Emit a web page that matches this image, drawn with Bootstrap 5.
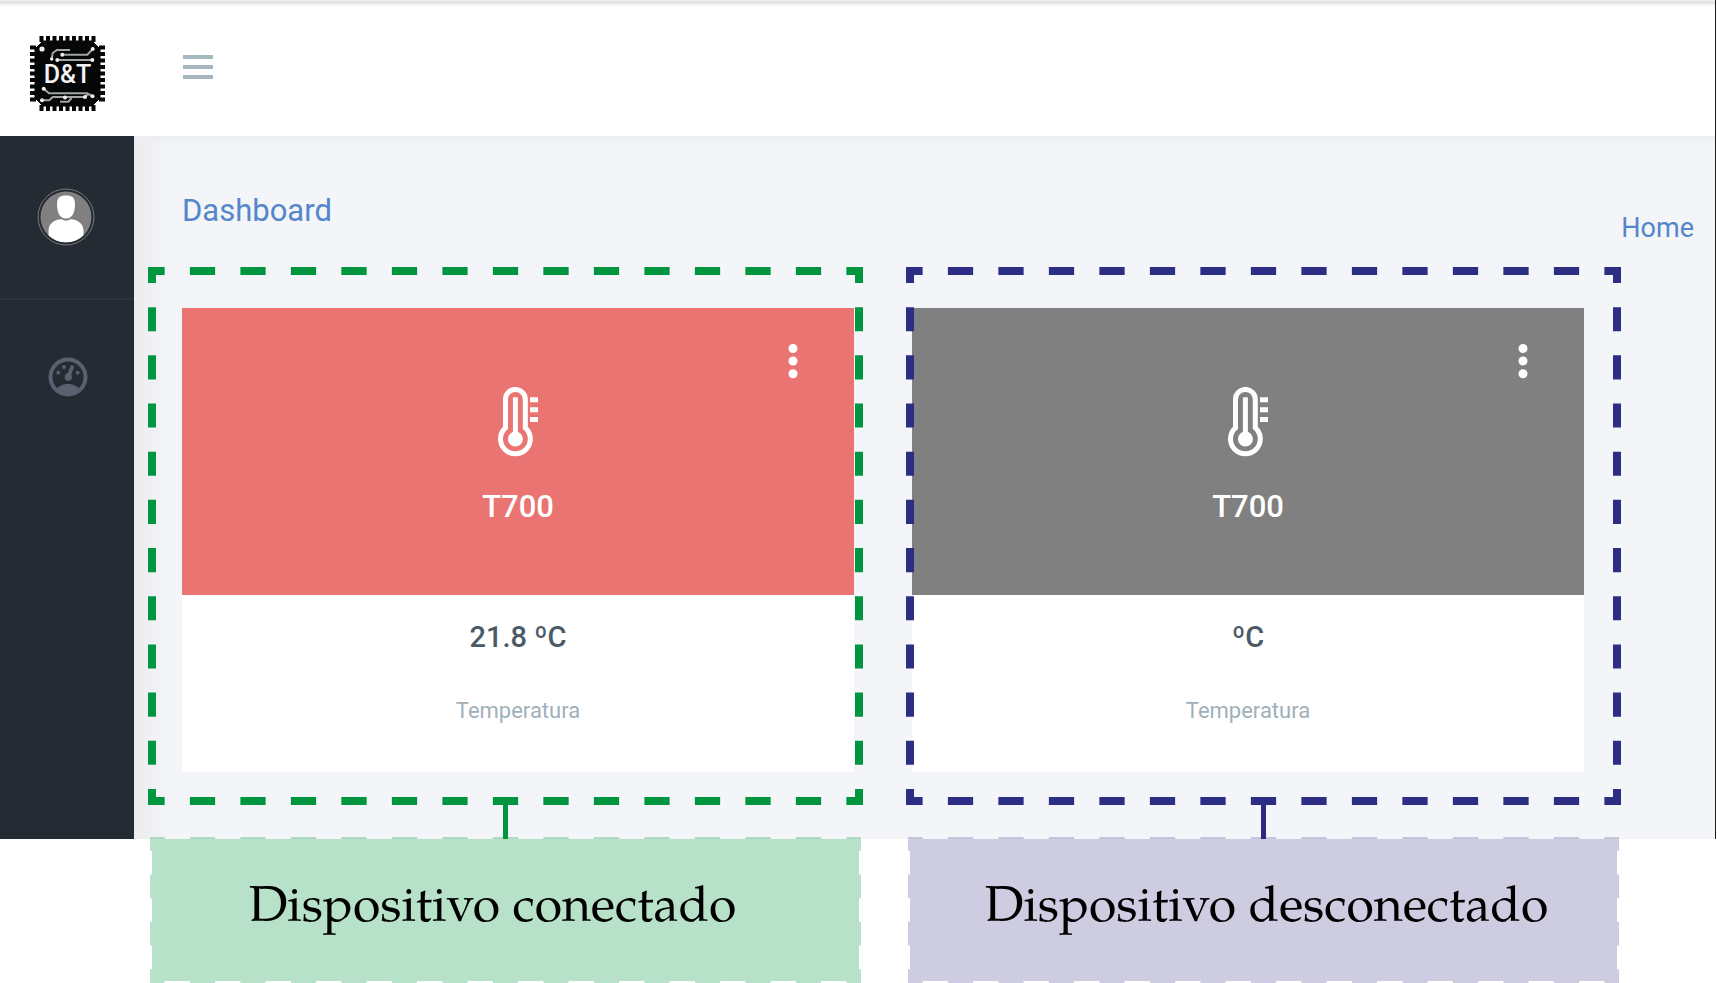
<!DOCTYPE html>
<html lang="es">
<head>
<meta charset="utf-8">
<meta name="viewport" content="width=device-width, initial-scale=1">
<title>Dashboard</title>
<link href="https://cdn.jsdelivr.net/npm/bootstrap@5.3.0/dist/css/bootstrap.min.css" rel="stylesheet">
<style>
  body { font-family: Roboto, "Liberation Sans", sans-serif; background: #fff; }
  svg { display: block; }

  /* Application shell */
  .app { background: #f3f5f9; border-right: 1px solid #1c1c1c; margin-right: 1px; }
  .topbar { height: 136px; background: linear-gradient(#f4f5f4, #dcdedd 2px, #f8f8f8 5px, #fff 8px); }
  .brand-box { width: 134px; padding: 11px 0 0 30px; }
  .menu-btn { margin: 0 0 2px 49px; }
  .side { width: 134px; background: #252b33; color: #5a6070; }
  .user-box { height: 164px; padding: 52px 0 0 37px; border-bottom: 2px solid #2d333c; }
  .gauge-link { color: inherit; padding: 57px 0 0 48px; }
  .content { background: linear-gradient(#eceef1, rgba(243, 245, 249, 0) 9px), linear-gradient(90deg, #ececef, #f3f5f9 36px); padding: 57px 94px 0 14px; }
  .heading { height: 73px; }
  .page-title { font-size: 31px; line-height: 36px; color: #5585ca; margin: 0 0 0 34px; }
  .home-link { font-size: 27px; line-height: 36px; color: #5585ca; margin: 17px -73px 0 0; }
  .pair { display: grid; grid-template-columns: 1fr 1fr; gap: 43px; }

  /* Device cards */
  .zone { position: relative; padding: 42px 9px 33px 34px; }
  .zone-off { padding: 42px 37px 33px 6px; }
  .device-head { position: relative; height: 287px; padding-top: 79px; color: #fff; }
  .on { background: #ea7471; }
  .off { background: #808080; }
  .device-name { font-size: 31px; line-height: 40px; font-weight: 500; margin: 30px 0 0; }
  .dots-btn { position: absolute; right: 56px; top: 35px; }
  .device-data { height: 177px; background: #fff; padding-top: 24px; }
  .reading { font-size: 29px; line-height: 36px; font-weight: 500; color: #4a5a66; margin: 0; }
  .kind { font-size: 22px; line-height: 30px; color: #9fb0ba; margin: 41px 0 0; }

  /* Dashed outlines: each side holds a whole number of periods */
  .dashes { position: absolute; left: 4px; top: 5px; width: calc(100% - 8px); height: calc(100% - 9px); overflow: visible; stroke-width: 8px; pointer-events: none; }
  .dashes .run { stroke-dasharray: 1 1; stroke-dashoffset: .5; }
  .dashes .knot { width: 8px; height: 8px; stroke: none; transform-box: fill-box; transform: translate(-50%, -50%); }
  .dashes .fill { stroke: none; }
  .green { stroke: #00963f; fill: #00963f; }
  .blue { stroke: #2c2e83; fill: #2c2e83; }
  .stem { position: relative; z-index: 2; width: 5px; height: 34px; margin: 0 auto; }
  .stem-green { background: #00963f; }
  .stem-blue { background: #312783; }

  /* Captions */
  .captions { margin: -2px 0 0 134px; padding: 0 96px 0 14px; }
  .caption-box { position: relative; height: 146px; margin: 0 2px; }
  .caption-box .dashes { left: 2px; top: 2px; width: calc(100% - 4px); height: calc(100% - 4px); stroke-width: 4px; opacity: .28; }
  .caption-box .knot { width: 4px; height: 4px; }
  .caption-box .blue { opacity: .23; stroke: #312783; fill: #312783; }
  .caption-text { position: relative; font-family: "TeX Gyre Pagella", "Palatino Linotype", Palatino, "Liberation Serif", serif; font-size: 50px; line-height: 64px; color: #000; margin: 0; padding: 41px 26px 0 0; text-align: center; }
  .caption-off { padding: 41px 0 0 6px; }
</style>
</head>
<body>
<svg width="0" height="0" class="position-absolute" aria-hidden="true">
  <symbol id="thermo" viewBox="0 0 40 70">
    <path d="M7.5 40.8V12.3a9.9 9.9 0 0 1 19.8 0v28.5a14.9 14.9 0 1 1-19.8 0z" fill="none" stroke="currentColor" stroke-width="5"/>
    <path d="M17.4 10.3V52" stroke="currentColor" stroke-width="5"/>
    <circle cx="17.4" cy="52" r="7.5" fill="currentColor"/>
    <path d="M32 10.3h8v5h-8zM32 20.2h8v5h-8zM32 30.1h8v5h-8z" fill="currentColor"/>
  </symbol>
  <symbol id="dots" viewBox="0 0 10 36">
    <g fill="currentColor"><circle cx="5" cy="5.5" r="4.5"/><circle cx="5" cy="18" r="4.5"/><circle cx="5" cy="30.8" r="4.5"/></g>
  </symbol>
</svg>

<div class="app">
  <header class="topbar d-flex align-items-center">
    <a href="#" class="brand-box" aria-label="D&amp;T">
      <svg width="75" height="75" viewBox="0 0 75 75">
        <path d="M13 5h49l8 8v49l-8 8H13l-8-8V13z" fill="#060709" stroke="#060709" stroke-width="1" stroke-linejoin="round"/>
        <g stroke="#060709" stroke-width="6" stroke-dasharray="4 2.5" fill="none">
          <path d="M9.500 3h56M9.500 72h56M3 9.500v56M72 9.500v56"/>
        </g>
        <g stroke="#a3a5a4" stroke-width="2" fill="none">
          <path d="M21.7 23l1-6 4.300-3H40M32.300 18.700h25L62.700 13M27.300 24h35.400"/>
          <path d="M13.700 52.700l5.300 4.600h38.300l5.400 3M12 64.300h7.300L22.700 61H55l3-3M30 65.700h8.300L41.700 62"/>
        </g>
        <g fill="#eee">
          <circle cx="12" cy="13" r="2.600"/><circle cx="21.700" cy="23" r="1.700"/><circle cx="32.300" cy="18.700" r="2"/><circle cx="62.700" cy="13" r="2"/>
          <circle cx="27.300" cy="24" r="2"/><circle cx="62.300" cy="24" r="2"/><circle cx="13.700" cy="52.700" r="2"/><circle cx="62.500" cy="60.300" r="2"/>
          <circle cx="12" cy="64.300" r="2"/><circle cx="35" cy="61.500" r="2"/><circle cx="55" cy="61" r="2"/>
        </g>
        <text x="37.500" y="47" text-anchor="middle" font-size="25" font-weight="500" fill="#f2f2f2">D&amp;T</text>
      </svg>
    </a>
    <button type="button" class="btn p-0 border-0 menu-btn" aria-label="Menu">
      <svg width="30" height="24" viewBox="0 0 30 24" fill="#a6b7bf"><path d="M0 0h30v4H0zM0 10h30v4H0zM0 20h30v4H0z"/></svg>
    </button>
  </header>

  <div class="d-flex">
    <nav class="side flex-shrink-0">
      <div class="user-box">
        <svg width="58" height="58" viewBox="0 0 58 58">
          <clipPath id="face"><circle cx="29" cy="29" r="25.500"/></clipPath>
          <circle cx="29" cy="29" r="28" fill="none" stroke="#777a7d"/>
          <g clip-path="url(#face)">
            <path d="M0 0h58v58H0z" fill="#808080"/>
            <path d="M29 7.500c6.500 0 9 2.500 9 8.500 0 9-3 14.500-9 14.500S20 25 20 16c0-6 2.500-8.500 9-8.500z" fill="#fff"/>
            <path d="M11.500 50V43c0-7 5-11.500 13-11.800 3 1.900 6 1.900 9 0 8 .3 13 4.800 13 11.800v7c-9 6-26 6-35 0z" fill="#fff"/>
          </g>
        </svg>
      </div>
      <a href="#" class="gauge-link d-block" aria-label="Dashboard">
        <svg width="40" height="40" viewBox="0 0 40 40" fill="currentColor">
          <circle cx="20" cy="20" r="17.500" fill="none" stroke="currentColor" stroke-width="4"/>
          <path d="M8 32.500c5-7.300 19-7.300 24 0-6 7.500-18 7.500-24 0z"/>
          <circle cx="10.300" cy="15.700" r="1.900"/><circle cx="16" cy="10" r="1.900"/><circle cx="29.700" cy="15.700" r="1.900"/>
          <circle cx="20.300" cy="20" r="3.700"/>
          <path d="M20.500 19.500l3.600-9.500" stroke="currentColor" stroke-width="3.600" stroke-linecap="round"/>
        </svg>
      </a>
    </nav>

    <main class="content flex-grow-1">
      <div class="heading d-flex justify-content-between align-items-start">
        <h1 class="page-title fw-normal">Dashboard</h1>
        <a href="#" class="home-link text-decoration-none">Home</a>
      </div>
      <div class="pair">
        <div>
          <section class="zone text-center">
            <div class="device-head on">
              <button type="button" class="btn p-0 border-0 text-white dots-btn" aria-label="Opciones"><svg width="10" height="36"><use href="#dots"/></svg></button>
              <svg width="40" height="70" class="mx-auto"><use href="#thermo"/></svg>
              <h2 class="device-name">T700</h2>
            </div>
            <div class="device-data">
              <p class="reading">21.8 ºC</p>
              <p class="kind">Temperatura</p>
            </div>
            <svg class="dashes green" aria-hidden="true">
              <line class="run" pathLength="28" x1="0" y1="0" x2="100%" y2="0"/><line class="run" pathLength="28" x1="0" y1="100%" x2="100%" y2="100%"/>
              <line class="run" pathLength="22" x1="0" y1="0" x2="0" y2="100%"/><line class="run" pathLength="22" x1="100%" y1="0" x2="100%" y2="100%"/>
              <rect class="knot"/><rect class="knot" x="100%"/><rect class="knot" y="100%"/><rect class="knot" x="100%" y="100%"/>
            </svg>
          </section>
          <div class="stem stem-green"></div>
        </div>
        <div>
          <section class="zone zone-off text-center">
            <div class="device-head off">
              <button type="button" class="btn p-0 border-0 text-white dots-btn" aria-label="Opciones"><svg width="10" height="36"><use href="#dots"/></svg></button>
              <svg width="40" height="70" class="mx-auto"><use href="#thermo"/></svg>
              <h2 class="device-name">T700</h2>
            </div>
            <div class="device-data">
              <p class="reading">ºC</p>
              <p class="kind">Temperatura</p>
            </div>
            <svg class="dashes blue" aria-hidden="true">
              <line class="run" pathLength="28" x1="0" y1="0" x2="100%" y2="0"/><line class="run" pathLength="28" x1="0" y1="100%" x2="100%" y2="100%"/>
              <line class="run" pathLength="22" x1="0" y1="0" x2="0" y2="100%"/><line class="run" pathLength="22" x1="100%" y1="0" x2="100%" y2="100%"/>
              <rect class="knot"/><rect class="knot" x="100%"/><rect class="knot" y="100%"/><rect class="knot" x="100%" y="100%"/>
            </svg>
          </section>
          <div class="stem stem-blue"></div>
        </div>
      </div>
    </main>
  </div>
</div>

<div class="captions pair">
  <div class="caption-box">
    <svg class="dashes green" aria-hidden="true">
      <rect class="fill" width="100%" height="100%"/>
      <line class="run" pathLength="28" x1="0" y1="0" x2="100%" y2="0"/><line class="run" pathLength="28" x1="0" y1="100%" x2="100%" y2="100%"/>
      <line class="run" pathLength="6" x1="0" y1="0" x2="0" y2="100%"/><line class="run" pathLength="6" x1="100%" y1="0" x2="100%" y2="100%"/>
      <rect class="knot"/><rect class="knot" x="100%"/><rect class="knot" y="100%"/><rect class="knot" x="100%" y="100%"/>
    </svg>
    <p class="caption-text">Dispositivo conectado</p>
  </div>
  <div class="caption-box">
    <svg class="dashes blue" aria-hidden="true">
      <rect class="fill" width="100%" height="100%"/>
      <line class="run" pathLength="28" x1="0" y1="0" x2="100%" y2="0"/><line class="run" pathLength="28" x1="0" y1="100%" x2="100%" y2="100%"/>
      <line class="run" pathLength="6" x1="0" y1="0" x2="0" y2="100%"/><line class="run" pathLength="6" x1="100%" y1="0" x2="100%" y2="100%"/>
      <rect class="knot"/><rect class="knot" x="100%"/><rect class="knot" y="100%"/><rect class="knot" x="100%" y="100%"/>
    </svg>
    <p class="caption-text caption-off">Dispositivo desconectado</p>
  </div>
</div>
<script src="https://cdn.jsdelivr.net/npm/bootstrap@5.3.0/dist/js/bootstrap.bundle.min.js"></script>
</body>
</html>
